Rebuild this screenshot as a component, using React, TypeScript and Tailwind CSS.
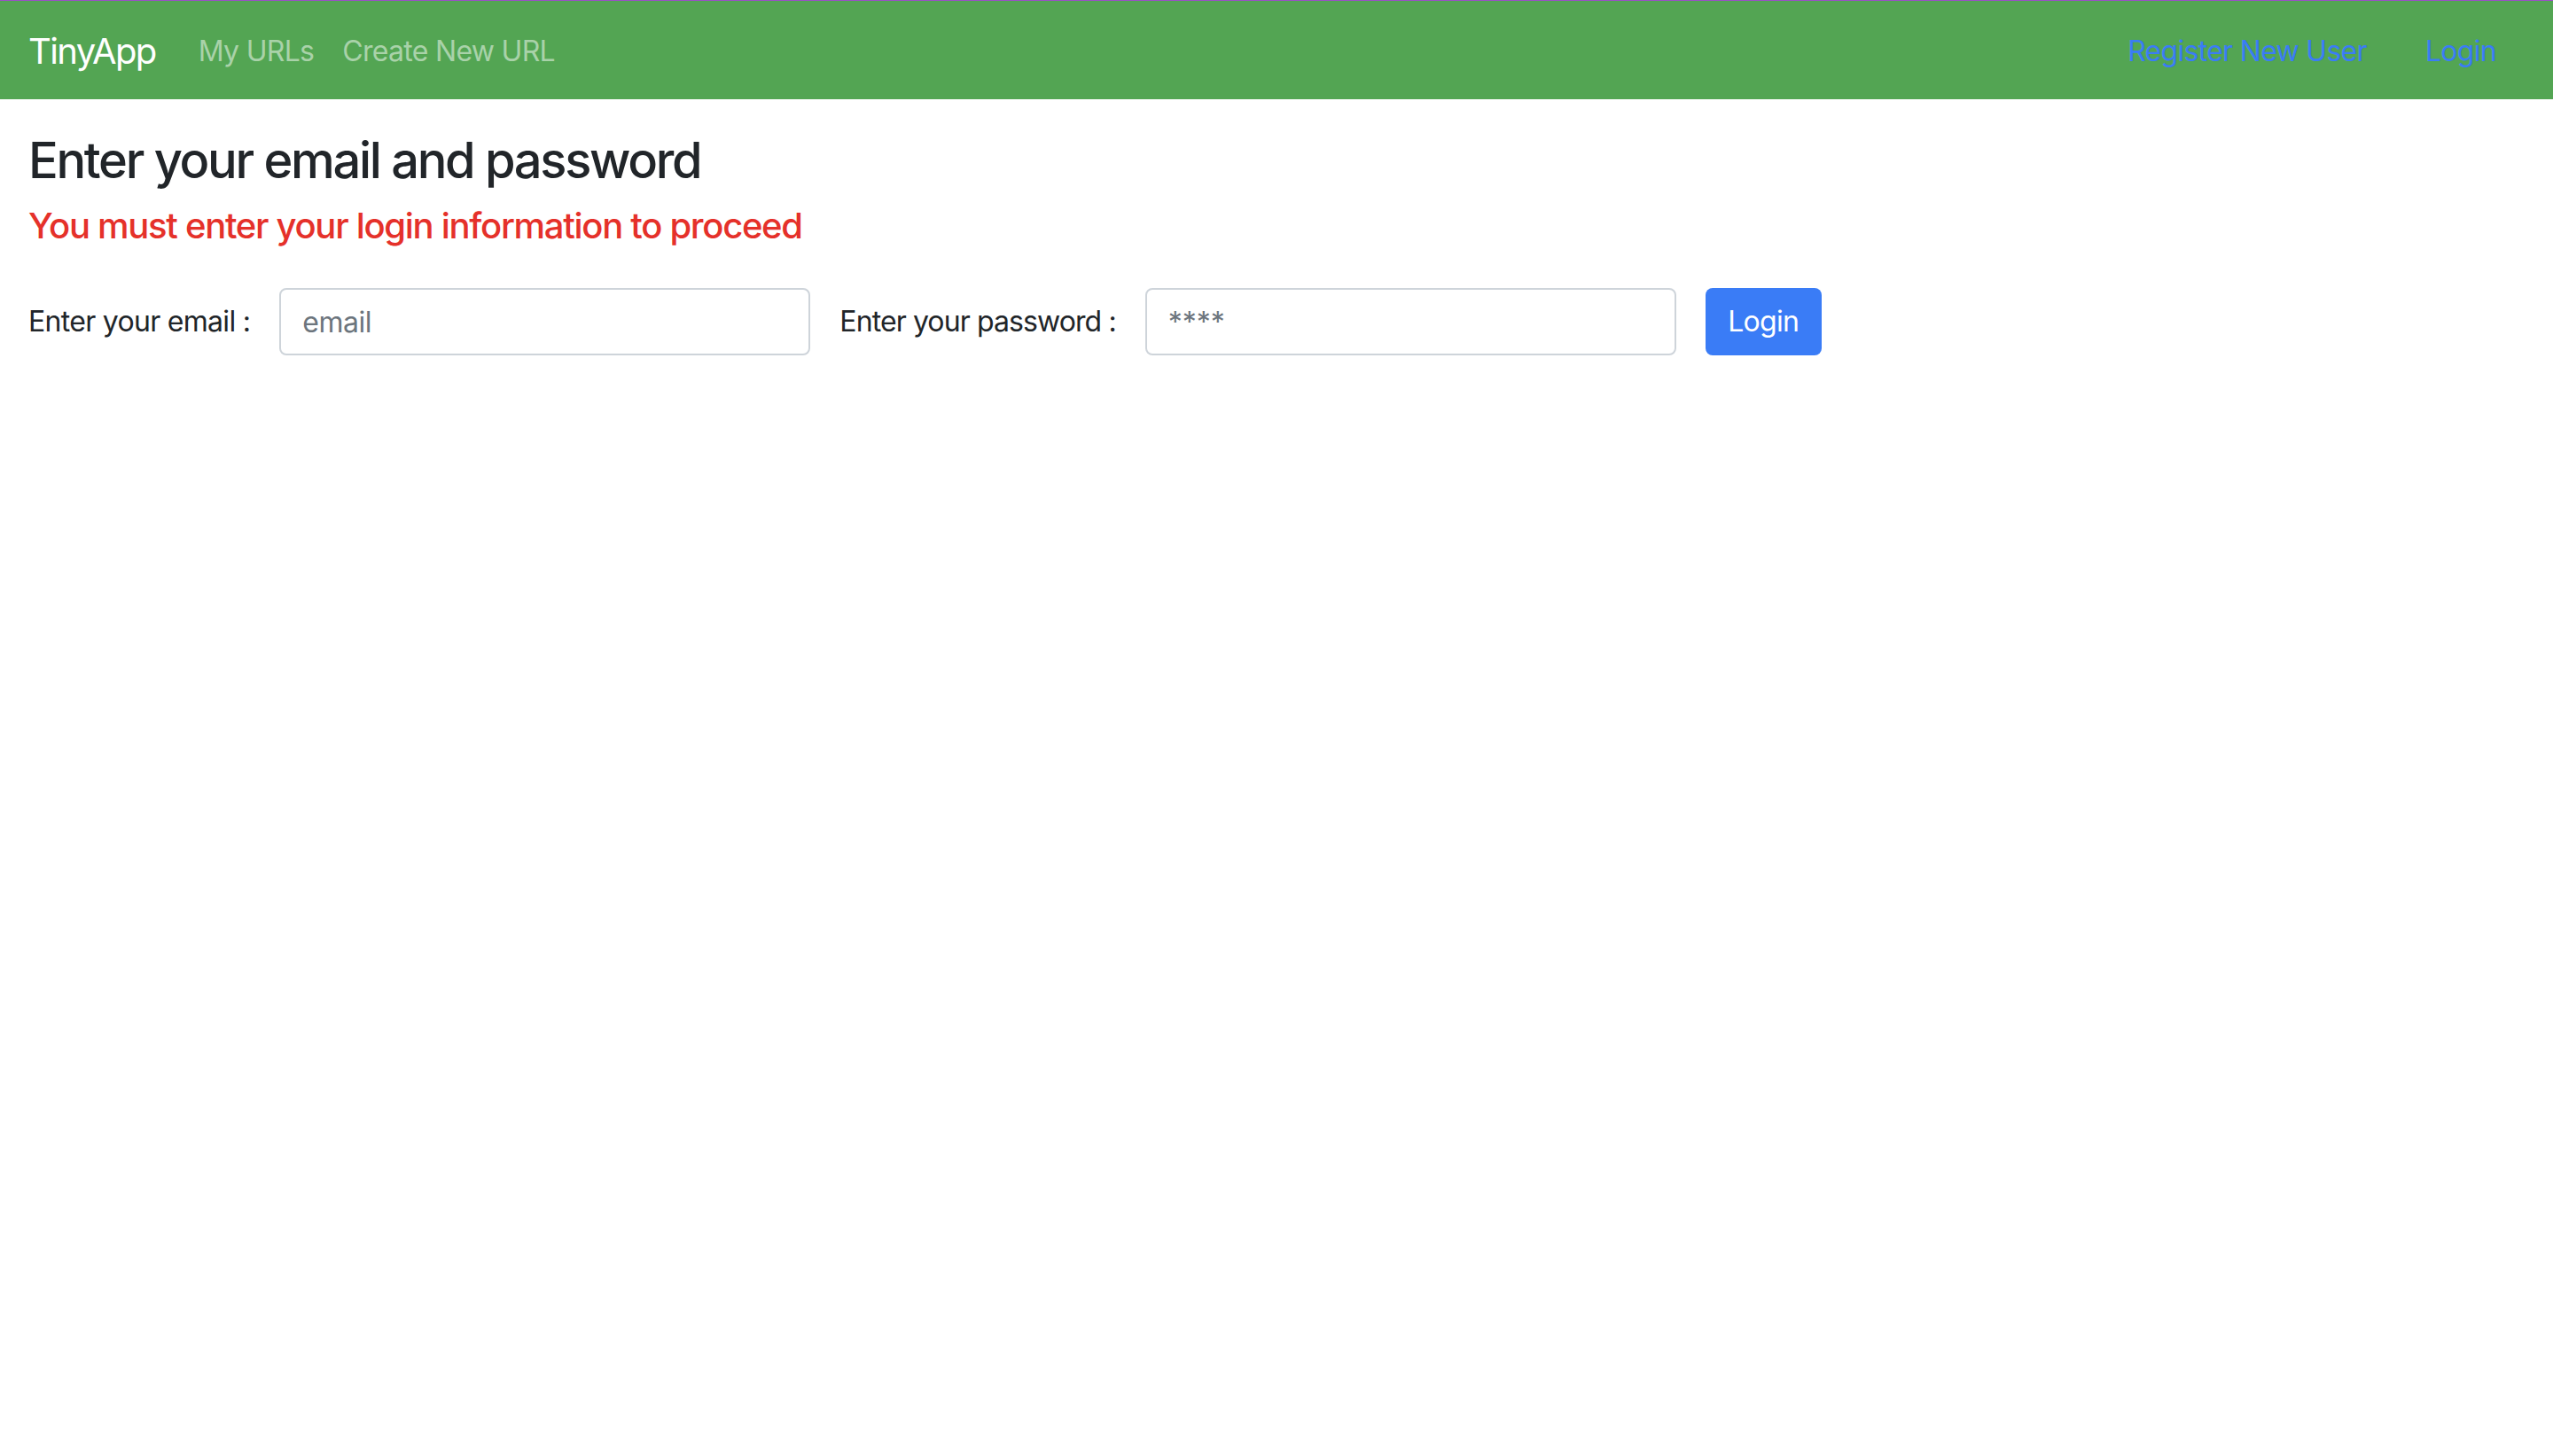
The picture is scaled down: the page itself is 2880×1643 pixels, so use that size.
import React from "react";

export default function App() {
  return (
    <div className="min-h-screen bg-white" style={{ fontFamily: "Inter, 'Noto Sans', sans-serif" }}>
      <div className="h-px bg-[#9a4fc6]" />
      <nav className="flex items-center h-[111px] px-[32px] pt-[3px] bg-[#53a553]">
        <a className="text-[40px] leading-[60px] tracking-[-1.6px] text-white mr-[32px]">TinyApp</a>
        <a className="px-[16px] text-[32px] leading-[48px] tracking-[-0.7px] text-[#a9d2a9]">My URLs</a>
        <a className="px-[16px] text-[32px] leading-[48px] tracking-[-0.7px] text-[#a9d2a9]">Create New URL</a>
        <div className="ml-auto flex items-center mr-[16px]">
          <a className="px-[16px] mr-[34px] text-[32px] leading-[48px] tracking-[-0.7px] text-[#3a7cf6]">Register New User</a>
          <a className="px-[16px] text-[32px] leading-[48px] tracking-[-0.7px] text-[#3a7cf6]">Login</a>
        </div>
      </nav>
      <main className="px-[32px] pt-[36px] text-[#212529]">
        <h3 className="text-[56px] font-medium leading-[1.2] tracking-[-2.3px] mb-[16px]">Enter your email and password</h3>
        <h5 className="text-[40px] font-medium leading-[1.2] tracking-[-1.3px] text-[#e5312a] mb-[46px]">
          You must enter your login information to proceed
        </h5>
        <form className="flex items-center gap-[33px]" onSubmit={(e) => e.preventDefault()}>
          <label className="text-[32px] leading-[48px] tracking-[-0.7px]">Enter your email :</label>
          <input
            type="text"
            placeholder="email"
            className="w-[599px] h-[76px] border-2 border-[#ced4da] rounded-[8px] px-[24px] text-[32px] tracking-[-0.5px] text-[#495057] placeholder:text-[#6c757d] outline-none"
          />
          <label className="text-[32px] leading-[48px] tracking-[-0.9px]">Enter your password :</label>
          <input
            type="password"
            placeholder="****"
            className="w-[599px] h-[76px] border-2 border-[#ced4da] rounded-[8px] px-[24px] text-[32px] text-[#495057] placeholder:text-[#6c757d] outline-none"
          />
          <button
            type="submit"
            className="w-[131px] h-[76px] rounded-[8px] bg-[#3a7cf6] text-white text-[32px] leading-[48px] tracking-[-0.7px]"
          >
            Login
          </button>
        </form>
      </main>
    </div>
  );
}
